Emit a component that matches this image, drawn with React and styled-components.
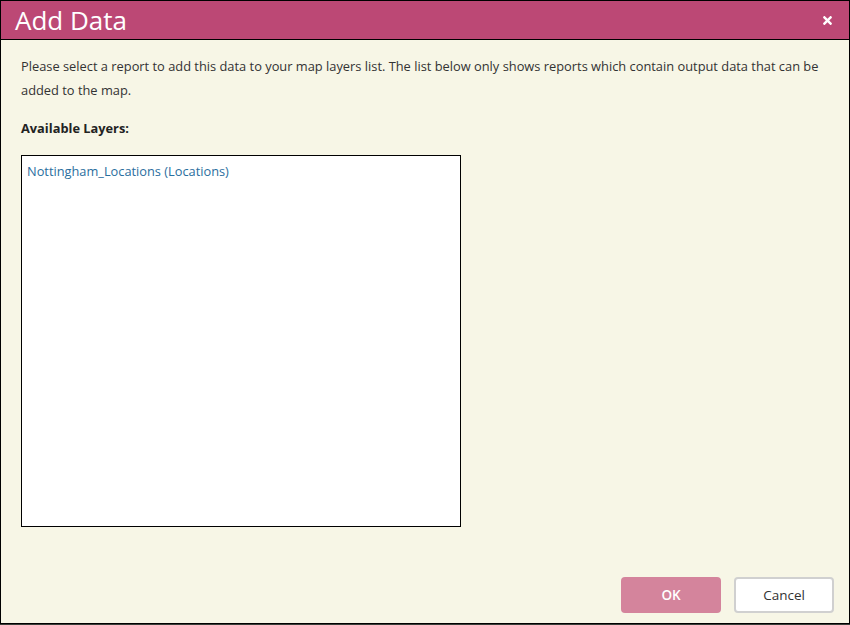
import styled, { createGlobalStyle } from "styled-components";
import { FaTimes } from "react-icons/fa";

const GlobalStyle = createGlobalStyle`
  html, body {
    margin: 0;
    padding: 0;
    background: #3a3f3a;
    font-family: "Open Sans", "Noto Sans", sans-serif;
  }
`;

const Dialog = styled.div`
  width: 850px;
  height: 624px;
  box-sizing: border-box;
  border: 1px solid #000;
  background: #f7f6e6;
  display: flex;
  flex-direction: column;
`;

const Header = styled.div`
  height: 39px;
  box-sizing: border-box;
  background: #bc4875;
  border-bottom: 1px solid #000;
  display: flex;
  align-items: center;
  justify-content: space-between;
  padding: 0 15px 0 14px;
`;

const Title = styled.h1`
  margin: 0;
  font-size: 26px;
  font-weight: 400;
  color: #fff;
  line-height: 1;
`;

const CloseButton = styled.button`
  background: none;
  border: none;
  padding: 0;
  color: #fff;
  display: flex;
  align-items: center;
  cursor: pointer;
  font-size: 13px;
`;

const Body = styled.div`
  flex: 1;
  padding: 14px 20px 0 20px;
  display: flex;
  flex-direction: column;
`;

const Intro = styled.p`
  margin: 0;
  max-width: 815px;
  font-size: 12.85px;
  line-height: 24px;
  color: #333;
`;

const Label = styled.div`
  margin-top: 14px;
  font-size: 12.8px;
  font-weight: 700;
  line-height: 24px;
  color: #222;
`;

const LayerList = styled.div`
  margin-top: 15px;
  width: 440px;
  height: 372px;
  box-sizing: border-box;
  border: 1px solid #000;
  background: #fff;
  padding: 6px 5px;
`;

const LayerItem = styled.div`
  font-size: 12.8px;
  line-height: 18px;
  color: #2a6e9e;
  cursor: pointer;
`;

const Footer = styled.div`
  display: flex;
  justify-content: flex-end;
  gap: 13px;
  padding: 0 15px 10px 0;
`;

const Button = styled.button`
  width: 100px;
  height: 36px;
  box-sizing: border-box;
  border-radius: 4px;
  font-family: "Open Sans", "Noto Sans", sans-serif;
  font-size: 13.5px;
  cursor: pointer;
  background: ${(p) => (p.$primary ? "#d4849c" : "#fff")};
  color: ${(p) => (p.$primary ? "#fff" : "#333")};
  border: ${(p) => (p.$primary ? "none" : "2px solid #d0d0d0")};
  font-weight: ${(p) => (p.$primary ? 600 : 400)};
`;

export default function App() {
  return (
    <>
      <GlobalStyle />
      <Dialog>
        <Header>
          <Title>Add Data</Title>
          <CloseButton aria-label="Close">
            <FaTimes />
          </CloseButton>
        </Header>
        <Body>
          <Intro>
            Please select a report to add this data to your map layers list. The list below only shows reports which contain output data that can be added to the map.
          </Intro>
          <Label>Available Layers:</Label>
          <LayerList>
            <LayerItem>Nottingham_Locations (Locations)</LayerItem>
          </LayerList>
        </Body>
        <Footer>
          <Button $primary>OK</Button>
          <Button>Cancel</Button>
        </Footer>
      </Dialog>
    </>
  );
}
